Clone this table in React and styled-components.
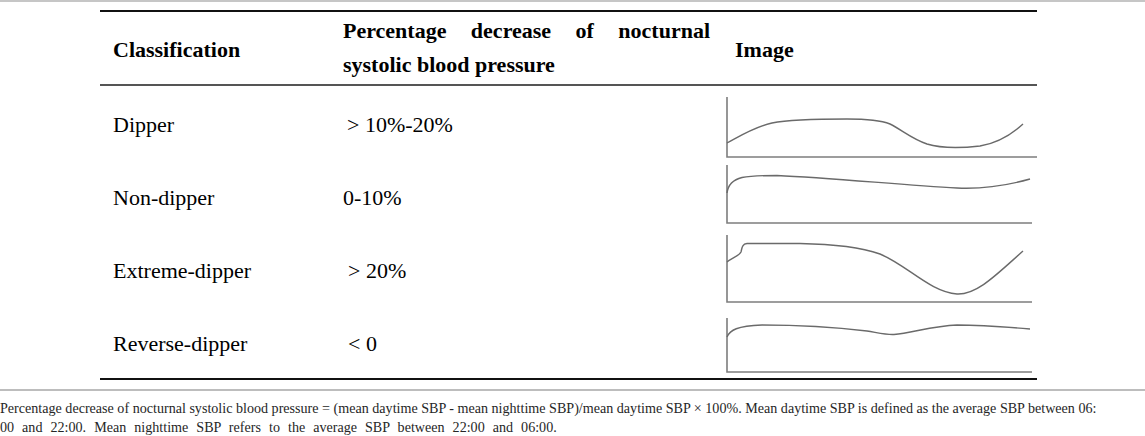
import * as React from 'react';
import styled, { createGlobalStyle } from 'styled-components';

const GlobalStyle = createGlobalStyle`
  html, body {
    margin: 0;
    padding: 0;
    overflow: hidden;
    background: #fff;
  }
  body {
    font-family: "Liberation Serif", "Times New Roman", serif;
    color: #000;
  }
`;

const COLS = '230px 392px 315px';

const Page = styled.div`
  width: 1145px;
`;

const TopRule = styled.div`
  height: 2px;
  background-color: #c6c6c6;
`;

const TableWrap = styled.div`
  padding: 8px 0 0 100px;
`;

const Table = styled.div`
  width: 937px;
  border-top: 2px solid #111;
  border-bottom: 2px solid #111;
`;

const HeadRow = styled.div`
  display: grid;
  grid-template-columns: ${COLS};
  height: 72px;
  border-bottom: 2px solid #555;
`;

const HeadCell = styled.div`
  padding: ${(p) => (p.$wrap ? '2px 12px 0 13px' : '25px 13px 0')};
  font-size: 22px;
  font-weight: bold;
  line-height: ${(p) => (p.$wrap ? '34px' : '25px')};
  text-align: ${(p) => (p.$wrap ? 'justify' : 'left')};
`;

const Row = styled.div`
  display: grid;
  grid-template-columns: ${COLS};
  height: 73px;
`;

const Cell = styled.div`
  padding: 26px 13px 0;
  padding-left: ${(p) => 13 + (p.$indent || 0)}px;
  font-size: 22px;
  line-height: 25px;
  white-space: nowrap;
`;

const ChartCell = styled.div`
  height: 73px;
`;

const Chart = styled.svg`
  display: block;
  overflow: visible;
`;

const FootRule = styled.div`
  height: 2px;
  margin-top: 9px;
  background-color: #bdbdbd;
`;

const Footnote = styled.p`
  margin: 0;
  padding-top: 8px;
  font-size: 14.1px;
  line-height: 19px;
  color: #262626;
  white-space: nowrap;
`;

const FootLine = styled.span`
  display: block;
  word-spacing: ${(p) => p.$spread || 0}px;
`;

const rows = [
  {
    name: 'Dipper',
    value: '> 10%-20%',
    indent: 4,
    axis: { top: 11, bottom: 71, right: 315 },
    curve:
      'M5,57 C18,50 32,41 50,37 C65,34 95,33 125,33 C145,33 158,34 168,38 C180,44 190,53 205,58 C218,62 240,62 258,60 C275,57 290,48 301,38',
  },
  {
    name: 'Non-dipper',
    value: '0-10%',
    indent: 0,
    axis: { top: 6, bottom: 64, right: 310 },
    curve:
      'M5,34 C6,26 10,21 20,18.5 C30,16.5 42,16.5 55,16.5 C110,19 180,26 235,29 C258,30 280,28 308,20',
  },
  {
    name: 'Extreme-dipper',
    value: '> 20%',
    indent: 5,
    axis: { top: 3, bottom: 70, right: 310 },
    curve:
      'M5,30 C10,26 17,24 19,20 C20,16 20,12 25,11.5 L78,11.5 C105,12 135,14 158,22 C185,33 208,60 235,62 C255,63 275,42 301,19',
  },
  {
    name: 'Reverse-dipper',
    value: '< 0',
    indent: 5,
    axis: { top: 13, bottom: 67, right: 310 },
    curve:
      'M5,32 C8,25 15,21 40,20 C80,20 120,23 145,26 C157,28 165,30 172,29.5 C190,28 210,21 235,20 C260,20 285,22 308,24',
  },
];

const PressureChart = ({ axis, curve }) => (
  <Chart width="315" height="73" viewBox="0 0 315 73">
    <path
      d={`M5,${axis.top} L5,${axis.bottom} L${axis.right},${axis.bottom}`}
      fill="none"
      stroke="#7d7d7d"
      strokeWidth="1.6"
    />
    <path d={curve} fill="none" stroke="#6a6a6a" strokeWidth="1.4" />
  </Chart>
);

export const App = () => {
  return (
    <Page>
      <GlobalStyle />
      <TopRule />
      <TableWrap>
        <Table>
          <HeadRow>
            <HeadCell>Classification</HeadCell>
            <HeadCell $wrap>
              Percentage decrease of nocturnal systolic blood pressure
            </HeadCell>
            <HeadCell>Image</HeadCell>
          </HeadRow>
          {rows.map((r) => (
            <Row key={r.name}>
              <Cell>{r.name}</Cell>
              <Cell $indent={r.indent}>{r.value}</Cell>
              <ChartCell>
                <PressureChart axis={r.axis} curve={r.curve} />
              </ChartCell>
            </Row>
          ))}
        </Table>
      </TableWrap>
      <FootRule />
      <Footnote>
        <FootLine>
          Percentage decrease of nocturnal systolic blood pressure = (mean daytime SBP - mean
          nighttime SBP)/mean daytime SBP × 100%. Mean daytime SBP is defined as the average SBP
          between 06:
        </FootLine>
        <FootLine $spread={4.5}>
          00 and 22:00. Mean nighttime SBP refers to the average SBP between 22:00 and 06:00.
        </FootLine>
      </Footnote>
    </Page>
  );
};

export default App;
